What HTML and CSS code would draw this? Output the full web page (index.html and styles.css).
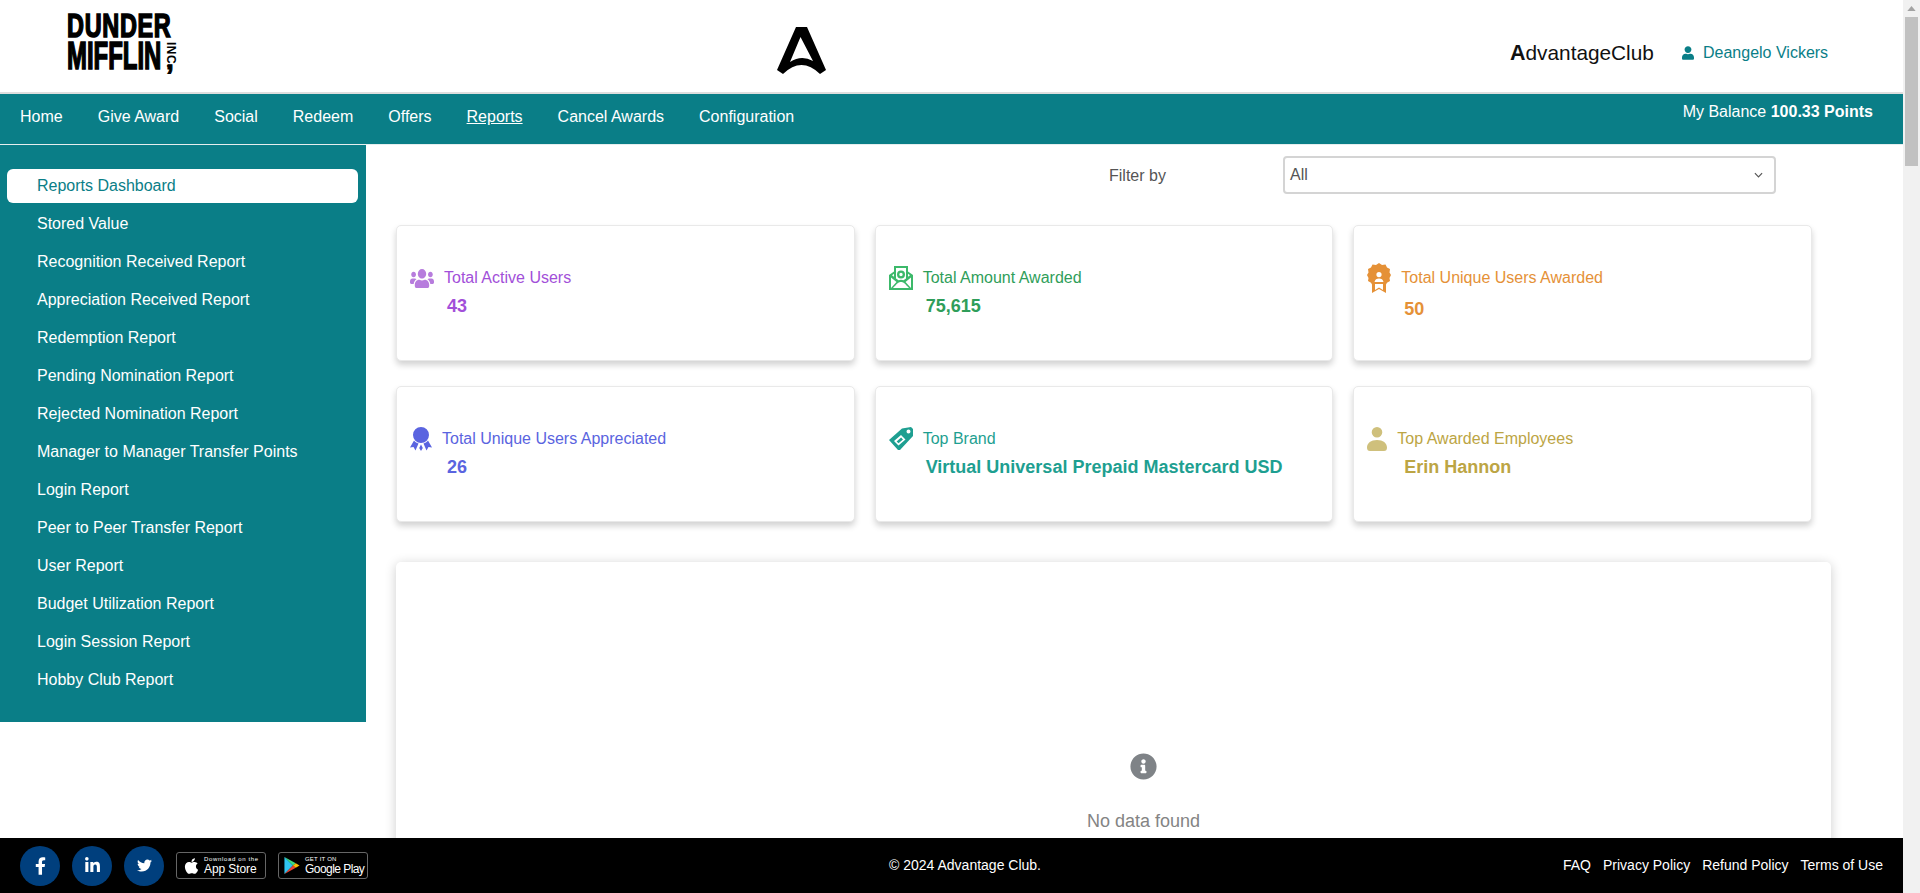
FILE: index.html
```html
<!DOCTYPE html>
<html lang="en">
<head>
<meta charset="utf-8">
<title>Reports Dashboard</title>
<link rel="stylesheet" href="styles.css">
</head>
<body>
<div class="shell">
  <div class="page">
    <header class="topbar">
      <a class="brand" href="#">
        <span class="brand-line brand-one">DUNDER</span>
        <span class="brand-line brand-two">MIFFLIN</span>
        <span class="brand-inc">INC.</span>
        <span class="brand-comma">,</span>
      </a>
      <svg class="a-logo" viewBox="0 0 49 47"><path fill-rule="evenodd" d="M19 0H30L49 43L43 47Q24.500 29 6 47L0 43ZM23.500 10L13 35Q24.500 27.500 36 34Z"/></svg>
      <div class="top-right">
        <span class="club"><b>A</b>dvantageClub</span>
        <span class="user">
          <svg class="user-icon" viewBox="0 0 448 512"><path d="M224 256c70.700 0 128-57.300 128-128S294.700 0 224 0 96 57.300 96 128s57.300 128 128 128zm89.600 32h-16.700c-22.200 10.200-46.900 16-72.900 16s-50.600-5.800-72.900-16h-16.700C60.200 288 0 348.200 0 422.400V464c0 26.500 21.500 48 48 48h352c26.500 0 48-21.500 48-48v-41.600c0-74.200-60.200-134.400-134.400-134.400z"/></svg>
          Deangelo Vickers
        </span>
      </div>
    </header>

    <nav class="mainnav">
      <ul class="nav-list">
        <li>Home</li>
        <li>Give Award</li>
        <li>Social</li>
        <li>Redeem</li>
        <li>Offers</li>
        <li class="current">Reports</li>
        <li>Cancel Awards</li>
        <li>Configuration</li>
      </ul>
      <div class="balance">My Balance <b>100.33 Points</b></div>
    </nav>

    <div class="workspace">
      <aside class="sidebar">
        <ul class="side-list">
          <li class="active">Reports Dashboard</li>
          <li>Stored Value</li>
          <li>Recognition Received Report</li>
          <li>Appreciation Received Report</li>
          <li>Redemption Report</li>
          <li>Pending Nomination Report</li>
          <li>Rejected Nomination Report</li>
          <li>Manager to Manager Transfer Points</li>
          <li>Login Report</li>
          <li>Peer to Peer Transfer Report</li>
          <li>User Report</li>
          <li>Budget Utilization Report</li>
          <li>Login Session Report</li>
          <li>Hobby Club Report</li>
        </ul>
      </aside>

      <main class="content">
        <div class="filter">
          <label class="filter-label">Filter by</label>
          <div class="select">
            <span>All</span>
            <svg class="chev" viewBox="0 0 10 6"><path d="M1 1l4 4 4-4"/></svg>
          </div>
        </div>

        <section class="cards">
          <article class="card purple">
            <div class="card-head">
              <svg class="ic ic-users" viewBox="0 32 640 448" preserveAspectRatio="none"><path d="M96 224c35.300 0 64-28.700 64-64s-28.700-64-64-64-64 28.700-64 64 28.700 64 64 64zm448 0c35.300 0 64-28.700 64-64s-28.700-64-64-64-64 28.700-64 64 28.700 64 64 64zm32 32h-64c-17.600 0-33.500 7.100-45.100 18.600 40.300 22.100 68.900 62 75.100 109.400h66c17.700 0 32-14.300 32-32v-32c0-35.300-28.700-64-64-64zm-256 0c61.900 0 112-50.100 112-112S381.900 32 320 32 208 82.100 208 144s50.100 112 112 112zm76.800 32h-8.300c-20.800 10-43.900 16-68.500 16s-47.600-6-68.500-16h-8.300C179.600 288 128 339.600 128 403.200V432c0 26.500 21.500 48 48 48h288c26.500 0 48-21.500 48-48v-28.800c0-63.600-51.600-115.200-115.200-115.200zm-223.700-13.400C161.500 263.100 145.600 256 128 256H64c-35.300 0-64 28.700-64 64v32c0 17.700 14.300 32 32 32h65.900c6.300-47.400 34.900-87.300 75.200-109.400z"/></svg>
              <span>Total Active Users</span>
            </div>
            <div class="card-num">43</div>
          </article>

          <article class="card green">
            <div class="card-head">
              <svg class="ic" viewBox="0 0 24 24"><path fill-rule="evenodd" d="M5 0H19V5.500L24 9V24H0V9L5 5.500ZM7 2V12.500L9.500 14.300A5.500 5.500 0 0 1 14.500 14.300L17 12.500V2ZM12 4.500A4 4 0 1 0 12 12.500A4 4 0 1 0 12 4.500ZM12 6.800A1.700 1.700 0 1 1 12 10.200A1.700 1.700 0 1 1 12 6.800ZM2 11.500V22L7.500 16ZM22 11.500L16.500 16L22 22ZM12 16C9 16 8 18 4 22H20C16 18 15 16 12 16ZM3 9.200L5 10.700V7.800ZM21 9.200L19 7.800V10.700Z"/></svg>
              <span>Total Amount Awarded</span>
            </div>
            <div class="card-num">75,615</div>
          </article>

          <article class="card orange">
            <div class="card-head">
              <svg class="ic ic-tall" viewBox="0 0 24 30"><path fill-rule="evenodd" d="M12 0L15 2L18.500 1.500L20 4.500L23 6L22.500 9.500L24 12L22.500 15L23 18L20 19.800L19 21.500V30L12 26L5 30V21.500L4 19.800L1 18L1.500 15L0 12L1.500 9.500L1 6L4 4.500L5.500 1.500L9 2ZM12 9A2.600 2.600 0 1 0 12 14.200A2.600 2.600 0 1 0 12 9ZM7.500 19C8 16.500 9.500 15.500 12 15.500S16 16.500 16.500 19ZM8 21V27L12 24.500L16 27V21Z"/></svg>
              <span>Total Unique Users Awarded</span>
            </div>
            <div class="card-num">50</div>
          </article>

          <article class="card blue">
            <div class="card-head">
              <svg class="ic ic-ribbon" viewBox="0 0 22 24"><path d="M11 0A8 8 0 1 0 11 16A8 8 0 1 0 11 0ZM4 13.500L0 20.500L3.500 20L5.500 23.500L8.500 16.500C7 16 5 15 4 13.500ZM18 13.500L22 20.500L18.500 20L16.500 23.500L13.500 16.500C15 16 17 15 18 13.500ZM11 17.500L9.200 21L11 24L12.800 21Z"/></svg>
              <span>Total Unique Users Appreciated</span>
            </div>
            <div class="card-num">26</div>
          </article>

          <article class="card teal">
            <div class="card-head">
              <svg class="ic" viewBox="0 0 24 24"><path fill-rule="evenodd" d="M0 13L13 1.500L22 0L24 2V9L11 23L9 23ZM19.500 2.500A2 2 0 1 0 19.500 6.500A2 2 0 1 0 19.500 2.500ZM12 8L5 14L9.500 18.500L16.500 12.500ZM12.100 10.600L14 12.400L9.500 16.300L7.600 14.400Z"/></svg>
              <span>Top Brand</span>
            </div>
            <div class="card-num">Virtual Universal Prepaid Mastercard USD</div>
          </article>

          <article class="card gold">
            <div class="card-head">
              <svg class="ic ic-person" viewBox="0 0 20 24"><path d="M10 0A5.300 5.300 0 1 0 10 10.600A5.300 5.300 0 1 0 10 0ZM10 13C4 13 0 16 0 20.500C0 23 1 24 3 24H17C19 24 20 23 20 20.500C20 16 16 13 10 13Z"/></svg>
              <span>Top Awarded Employees</span>
            </div>
            <div class="card-num">Erin Hannon</div>
          </article>
        </section>

        <section class="panel">
          <svg class="info" viewBox="0 0 512 512"><path d="M256 8C119 8 8 119 8 256s111 248 248 248 248-111 248-248S393 8 256 8zm0 110c23.200 0 42 18.800 42 42s-18.800 42-42 42-42-18.800-42-42 18.800-42 42-42zm56 254c0 6.600-5.400 12-12 12h-88c-6.600 0-12-5.400-12-12v-24c0-6.600 5.400-12 12-12h12v-64h-12c-6.600 0-12-5.400-12-12v-24c0-6.600 5.400-12 12-12h64c6.600 0 12 5.400 12 12v100h12c6.600 0 12 5.400 12 12v24z"/></svg>
          <p class="empty">No data found</p>
        </section>
      </main>
    </div>

    <footer class="footer">
      <div class="foot-left">
        <span class="social"><svg class="s-f" viewBox="0 0 320 512"><path d="M279.140 288l14.220-92.660h-88.910v-60.130c0-25.350 12.420-50.060 52.240-50.060h40.420V6.260S260.430 0 225.360 0c-73.220 0-121.080 44.380-121.080 124.720v70.620H22.890V288h81.390v224h100.170V288z"/></svg></span>
        <span class="social"><svg class="s-in" viewBox="0 0 448 512"><path d="M100.280 448H7.400V148.900h92.880zM53.790 108.100C24.090 108.100 0 83.500 0 53.800a53.790 53.790 0 0 1 107.580 0c0 29.700-24.100 54.300-53.790 54.300zM447.900 448h-92.680V302.400c0-34.700-.7-79.200-48.290-79.200-48.290 0-55.690 37.700-55.690 76.700V448h-92.780V148.900h89.080v40.800h1.300c12.400-23.500 42.690-48.300 87.880-48.300 94 0 111.280 61.900 111.280 142.300V448z"/></svg></span>
        <span class="social"><svg class="s-tw" viewBox="0 0 512 512"><path d="M459.370 151.716c.325 4.548.325 9.097.325 13.645 0 138.720-105.583 298.558-298.558 298.558-59.452 0-114.680-17.219-161.137-47.106 8.447.974 16.568 1.299 25.340 1.299 49.055 0 94.213-16.568 130.274-44.832-46.132-.975-84.792-31.188-98.112-72.772 6.498.974 12.995 1.624 19.818 1.624 9.421 0 18.843-1.300 27.614-3.573-48.081-9.747-84.143-51.980-84.143-102.985v-1.299c13.969 7.797 30.214 12.670 47.431 13.319-28.264-18.843-46.781-51.005-46.781-87.391 0-19.492 5.197-37.360 14.294-52.954 51.655 63.675 129.300 105.258 216.365 109.807-1.624-7.797-2.599-15.918-2.599-24.040 0-57.828 46.782-104.934 104.934-104.934 30.213 0 57.502 12.670 76.670 33.137 23.715-4.548 46.456-13.320 66.599-25.340-7.798 24.366-24.366 44.833-46.132 57.827 21.117-2.273 41.584-8.122 60.426-16.243-14.292 20.791-32.161 39.308-52.628 54.253z"/></svg></span>
        <span class="store">
          <svg class="st-apple" viewBox="0 0 384 512"><path d="M318.700 268.700c-.2-36.700 16.400-64.400 50-84.800-18.800-26.900-47.200-41.700-84.700-44.600-35.500-2.800-74.300 20.700-88.500 20.700-15 0-49.400-19.700-76.400-19.700C63.300 141.200 4 184.800 4 273.500q0 39.300 14.400 81.200c12.800 36.700 59 126.700 107.200 125.200 25.200-.6 43-17.900 75.800-17.900 31.800 0 48.300 17.900 76.400 17.900 48.600-.7 90.400-82.500 102.600-119.300-65.200-30.700-61.700-90-61.700-91.900zm-56.600-164.200c27.300-32.400 24.800-61.900 24-72.500-24.100 1.400-52 16.400-67.900 34.900-17.500 19.800-27.800 44.300-25.600 71.900 26.100 2 49.900-11.400 69.500-34.300z"/></svg>
          <span class="st-text"><small>Download on the</small><em>App Store</em></span>
        </span>
        <span class="store store-play">
          <svg class="st-play" viewBox="0 0 16 18"><path fill="#2ec4f0" d="M0 0L9 9L0 18Z"/><path fill="#3ddc84" d="M0 0L12 6.500L9 9Z"/><path fill="#ea4335" d="M0 18L12 11.500L9 9Z"/><path fill="#fbbc04" d="M12 6.500L16 9L12 11.500L9 9Z"/></svg>
          <span class="st-text"><small class="caps">GET IT ON</small><em>Google Play</em></span>
        </span>
      </div>
      <div class="copy">© 2024 Advantage Club.</div>
      <div class="foot-links">
        <span>FAQ</span><span>Privacy Policy</span><span>Refund Policy</span><span>Terms of Use</span>
      </div>
    </footer>
  </div>

  <div class="scrollbar">
    <svg class="sb-arrow" viewBox="0 0 10 6"><path d="M5 0L10 6H0Z"/></svg>
    <div class="sb-thumb"></div>
  </div>
</div>
</body>
</html>
```
FILE: styles.css
```css
* { box-sizing: border-box; }
html, body { margin: 0; height: 100%; overflow: hidden; }
body { font-family: "Liberation Sans", Arial, sans-serif; font-size: 16px; color: #555; background: #fff; }
ul { list-style: none; margin: 0; padding: 0; }
p { margin: 0; }

.shell { display: flex; height: 893px; }
.page { position: relative; width: 1903px; height: 893px; overflow: hidden; display: flex; flex-direction: column; }

/* scrollbar */
.scrollbar { width: 17px; background: #f1f1f1; display: flex; flex-direction: column; align-items: center; }
.sb-arrow { width: 9px; height: 5px; margin-top: 6px; fill: #a3a3a3; }
.sb-thumb { width: 13px; height: 149px; margin-top: 6px; background: #c1c1c1; }

/* header */
.topbar { height: 94px; flex: none; display: flex; align-items: flex-start; background: #fff; border-bottom: 2px solid #dedede; }
.brand { position: relative; display: block; width: 120px; height: 72px; margin: 13px 0 0 67px; color: #000; text-decoration: none; font-family: "Liberation Sans Narrow", "Liberation Sans", sans-serif; font-weight: 700; flex: none; }
.brand-line { display: block; white-space: nowrap; transform-origin: left top; -webkit-text-stroke: 1.6px #000; }
.brand-one { font-size: 33px; line-height: 24px; height: 28px; letter-spacing: 1px; transform: scaleX(.71); padding-top: 1px; }
.brand-two { font-size: 38px; line-height: 28px; height: 28px; letter-spacing: 0; transform: scaleX(.63); padding-top: 1px; }
.brand-inc { position: absolute; left: 98px; top: 29px; font-size: 12px; line-height: 12px; letter-spacing: .5px; transform-origin: left top; transform: translateX(12px) rotate(90deg); font-family: "Liberation Sans", sans-serif; }
.brand-comma { position: absolute; left: 99px; top: 33px; font-size: 28px; line-height: 28px; -webkit-text-stroke: 1px #000; }
.a-logo { width: 49px; height: 47px; margin: 27px 0 0 590px; flex: none; fill: #000; }
.top-right { display: flex; align-items: center; margin: 44px 0 0 684px; height: 18px; white-space: nowrap; }
.club { font-size: 20.8px; color: #111; width: 145px; }
.club b { font-weight: 700; font-size: 21.500px; }
.user { display: flex; align-items: center; margin-left: 27px; color: #0a7e87; }
.user-icon { width: 12px; height: 14px; margin-right: 9px; fill: #0a7e87; }

/* nav */
.mainnav { height: 51px; flex: none; display: flex; justify-content: space-between; background: #0a7e87; color: #fff; border-bottom: 1px solid #e6eeee; padding: 0 30px 0 20px; }
.nav-list { display: flex; gap: 35px; padding-top: 14px; line-height: 18px; }
.nav-list .current { text-decoration: underline; }
.balance { padding-top: 9px; line-height: 18px; }

/* workspace */
.workspace { display: flex; flex: 1; min-height: 0; align-items: flex-start; }
.sidebar { width: 366px; height: 577px; flex: none; background: #0a7e87; padding: 24px 8px 0 7px; }
.side-list { display: flex; flex-direction: column; gap: 4px; }
.side-list li { height: 34px; line-height: 33px; padding-left: 30px; color: #fff; border-radius: 6px; white-space: nowrap; }
.side-list .active { background: #fff; color: #0a7e87; }

.content { flex: none; width: 1537px; padding: 11px 0 0 30px; }
.filter { display: flex; align-items: center; height: 38px; }
.filter-label { margin-left: 713px; width: 174px; padding-top: 2px; color: #555; }
.select { width: 493px; height: 38px; border: 2px solid #d4d4d4; border-radius: 4px; display: flex; align-items: center; justify-content: space-between; padding: 0 11px 0 5px; color: #555; }
.chev { width: 9px; height: 6px; fill: none; stroke: #555; stroke-width: 1.3; }

/* cards */
.cards { margin-top: 31px; width: 1416px; display: grid; grid-template-columns: repeat(3, 1fr); grid-auto-rows: 136px; gap: 25px 20px; }
.card { display: flex; flex-direction: column; justify-content: center; padding: 2px 0 0 13px; background: #fff; border: 1px solid #e9e9e9; border-radius: 5px; box-shadow: 0 4px 6px rgba(0,0,0,.18); }
.card-head { display: flex; align-items: center; gap: 10px; min-height: 24px; white-space: nowrap; }
.ic { width: 24px; height: 24px; flex: none; fill: currentColor; }
.ic-users { height: 19px; width: 24px; }
.ic-tall { height: 30px; }
.ic-ribbon { width: 22px; }
.ic-person { width: 20px; }
.card-num { font-weight: 700; font-size: 18px; line-height: 32px; margin-left: 37px; white-space: nowrap; }
.purple { color: #a24fd9; } .purple .ic { color: #b77cdd; }
.green { color: #2f9e5a; } .green .ic { color: #3cb96a; }
.orange { color: #e59137; }
.blue { color: #5a64e0; }
.teal { color: #1e9f91; }
.gold { color: #bca544; } .gold .ic { color: #cfc07c; }

/* panel */
.panel { margin-top: 40px; width: 1435px; height: 520px; border-radius: 5px; background: #fff; box-shadow: 0 2px 12px rgba(0,0,0,.2); display: flex; flex-direction: column; align-items: center; padding: 191px 0 0 60px; }
.info { width: 27px; height: 27px; fill: #7f8387; }
.empty { margin-top: 30px; font-size: 18px; line-height: 22px; color: #848484; }

/* footer */
.footer { position: absolute; left: 0; right: 0; bottom: 0; height: 55px; background: #000; color: #fff; display: flex; align-items: center; font-size: 14px; padding: 0 20px; }
.foot-left { display: flex; align-items: center; gap: 12px; width: 869px; }
.social { width: 40px; height: 40px; border-radius: 50%; background: #003f7d; display: flex; align-items: center; justify-content: center; fill: #fff; }
.s-f { width: 11px; height: 18px; }
.s-in { width: 15px; height: 17px; }
.s-tw { width: 15px; height: 15px; }
.store { width: 90px; height: 27px; border: 1px solid #666; border-radius: 3px; display: flex; align-items: center; gap: 5px; padding-left: 7px; }
.store-play { padding-left: 5px; }
.st-apple { width: 15px; height: 18px; fill: #fff; }
.st-play { width: 16px; height: 17px; }
.st-text { display: flex; flex-direction: column; line-height: 1; white-space: nowrap; }
.st-text small { font-size: 6px; letter-spacing: .65px; }
.st-text small.caps { letter-spacing: .2px; }
.st-text em { font-style: normal; font-size: 12px; margin-top: 1px; letter-spacing: -.1px; }
.store-play em { letter-spacing: -.55px; }
.copy { white-space: nowrap; margin-bottom: 2px; }
.foot-links { margin-left: auto; display: flex; gap: 12px; white-space: nowrap; margin-bottom: 2px; }
```
